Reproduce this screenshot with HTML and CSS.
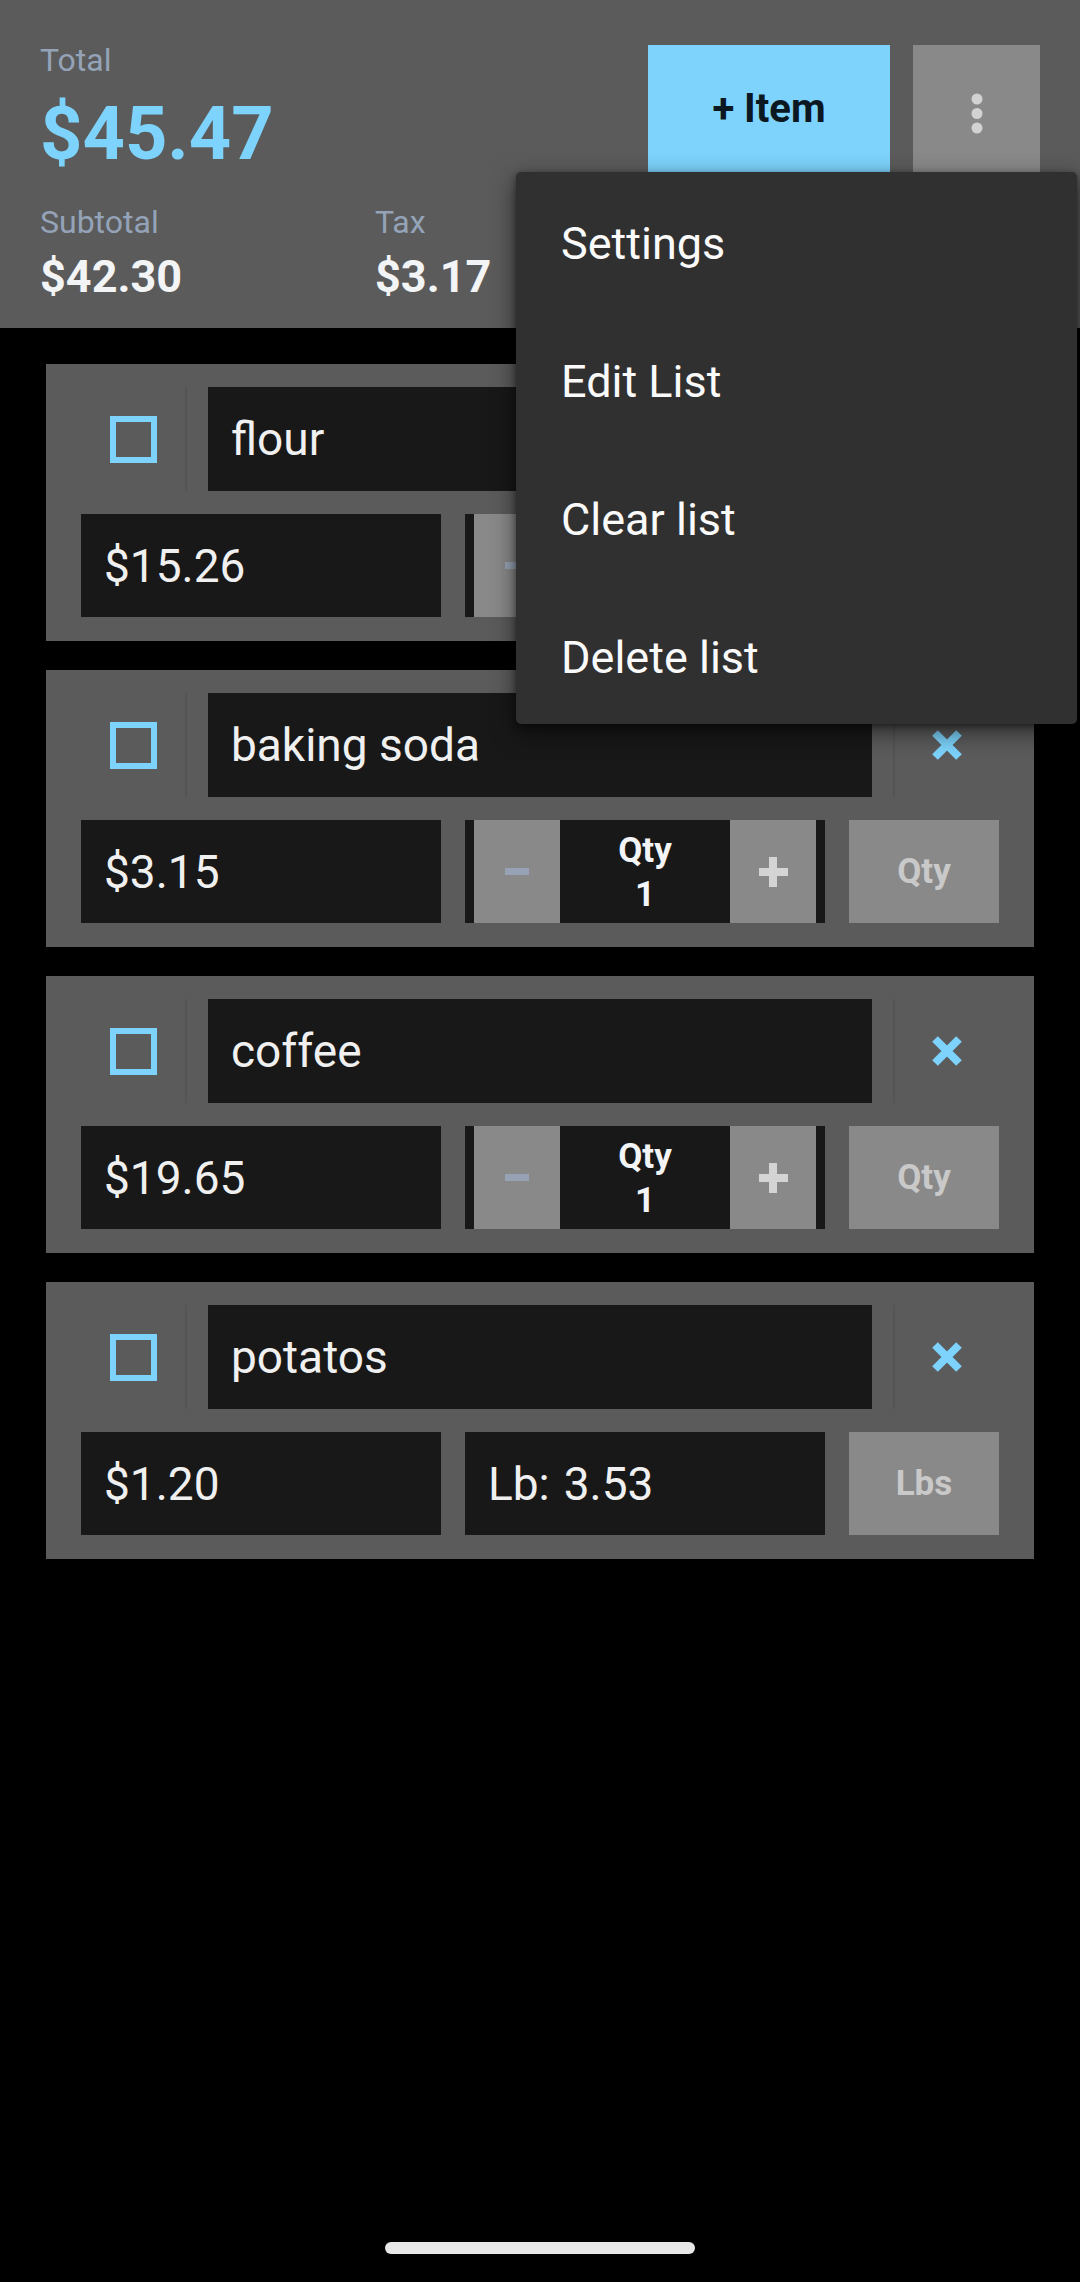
FILE: index.html
```html
<!DOCTYPE html>
<html lang="en">
<head>
    <meta charset="UTF-8">
    <meta name="viewport" content="width=device-width, initial-scale=1.0">
    <title>Shopping List</title>
    <link rel="stylesheet" href="styles.css">
</head>
<body>
<div class="app">
    <!-- Totals header -->
    <div class="summary">
        <div class="totals">
            <div class="label">Total</div>
            <div class="total-value">$45.47</div>
            <div class="breakdown">
                <div class="col col-sub">
                    <div class="label">Subtotal</div>
                    <div class="value">$42.30</div>
                </div>
                <div class="col">
                    <div class="label">Tax</div>
                    <div class="value">$3.17</div>
                </div>
            </div>
        </div>
        <div class="actions">
            <button class="add-btn">+ Item</button>
            <button class="more-btn">
                <svg width="12" height="42" viewBox="0 0 12 42">
                    <circle cx="6" cy="6" r="5.5" fill="#d2d2d2"/>
                    <circle cx="6" cy="20.5" r="5.5" fill="#d2d2d2"/>
                    <circle cx="6" cy="35" r="5.5" fill="#d2d2d2"/>
                </svg>
            </button>
        </div>
    </div>

    <!-- Items -->
    <div class="items">
        <div class="card">
            <div class="row-top">
                <div class="check-cell"><span class="checkbox"></span></div>
                <div class="field name">flour</div>
                <div class="remove-cell">
                    <svg width="30" height="30" viewBox="0 0 30 30"><path d="M3 3L27 27M27 3L3 27" stroke="#7dd3fc" stroke-width="8"/></svg>
                </div>
            </div>
            <div class="row-bottom">
                <div class="field price">$15.26</div>
                <div class="qty">
                    <div class="step"><span class="minus"></span></div>
                    <div class="qty-value">Qty<br>1</div>
                    <div class="step"><span class="plus"></span></div>
                </div>
                <div class="unit-btn">Qty</div>
            </div>
        </div>

        <div class="card">
            <div class="row-top">
                <div class="check-cell"><span class="checkbox"></span></div>
                <div class="field name">baking soda</div>
                <div class="remove-cell">
                    <svg width="30" height="30" viewBox="0 0 30 30"><path d="M3 3L27 27M27 3L3 27" stroke="#7dd3fc" stroke-width="8"/></svg>
                </div>
            </div>
            <div class="row-bottom">
                <div class="field price">$3.15</div>
                <div class="qty">
                    <div class="step"><span class="minus"></span></div>
                    <div class="qty-value">Qty<br>1</div>
                    <div class="step"><span class="plus"></span></div>
                </div>
                <div class="unit-btn">Qty</div>
            </div>
        </div>

        <div class="card">
            <div class="row-top">
                <div class="check-cell"><span class="checkbox"></span></div>
                <div class="field name">coffee</div>
                <div class="remove-cell">
                    <svg width="30" height="30" viewBox="0 0 30 30"><path d="M3 3L27 27M27 3L3 27" stroke="#7dd3fc" stroke-width="8"/></svg>
                </div>
            </div>
            <div class="row-bottom">
                <div class="field price">$19.65</div>
                <div class="qty">
                    <div class="step"><span class="minus"></span></div>
                    <div class="qty-value">Qty<br>1</div>
                    <div class="step"><span class="plus"></span></div>
                </div>
                <div class="unit-btn">Qty</div>
            </div>
        </div>

        <div class="card">
            <div class="row-top">
                <div class="check-cell"><span class="checkbox"></span></div>
                <div class="field name">potatos</div>
                <div class="remove-cell">
                    <svg width="30" height="30" viewBox="0 0 30 30"><path d="M3 3L27 27M27 3L3 27" stroke="#7dd3fc" stroke-width="8"/></svg>
                </div>
            </div>
            <div class="row-bottom">
                <div class="field price">$1.20</div>
                <div class="field weight"><span class="unit">Lb:</span>3.53</div>
                <div class="unit-btn">Lbs</div>
            </div>
        </div>
    </div>

    <!-- Overflow menu (open) -->
    <div class="menu">
        <div class="menu-item">Settings</div>
        <div class="menu-item">Edit List</div>
        <div class="menu-item">Clear list</div>
        <div class="menu-item">Delete list</div>
    </div>

    <div class="home-bar"></div>
</div>
</body>
</html>
```

FILE: styles.css
```css
body {
    margin: 0;
    background-color: #000;
    font-family: Roboto, "Noto Sans", sans-serif;
    color: #f3f4f6;
}

.app {
    position: relative;
    width: 1080px;
    height: 2282px;
    overflow: hidden;
}

/* header */
.summary {
    box-sizing: border-box;
    height: 328px;
    background-color: #5b5b5b;
    padding: 41px 40px 28px 40px;
    display: flex;
    justify-content: space-between;
    align-items: flex-start;
}

.label {
    font-size: 32px;
    line-height: 38px;
    color: #94a3b8;
}

.total-value {
    margin-top: 17px;
    font-size: 74px;
    line-height: 75px;
    font-weight: bold;
    color: #7dd3fc;
}

.breakdown {
    display: flex;
    margin-top: 32px;
}

.col-sub {
    width: 335px;
}

.col .value {
    margin-top: 13px;
    font-size: 45px;
    line-height: 46px;
    font-weight: bold;
    color: #f3f4f6;
}

.actions {
    display: flex;
    gap: 23px;
    margin-top: 4px;
}

.add-btn, .more-btn {
    border: none;
    height: 127px;
    padding: 0;
    display: flex;
    align-items: center;
    justify-content: center;
    font-family: inherit;
}

.add-btn {
    width: 242px;
    background-color: #7dd3fc;
    color: #0b1721;
    font-size: 40px;
    font-weight: bold;
}

.more-btn {
    width: 127px;
    background-color: #898989;
    padding-top: 10px;
}

/* list */
.items {
    padding: 36px 46px 0 46px;
    display: flex;
    flex-direction: column;
    gap: 29px;
}

.card {
    background-color: #5b5b5b;
    padding: 23px 35px 24px 35px;
    display: flex;
    flex-direction: column;
    gap: 23px;
}

.row-top {
    display: flex;
    gap: 23px;
    height: 104px;
}

.row-bottom {
    display: flex;
    gap: 24px;
    height: 103px;
}

.check-cell, .remove-cell {
    width: 104px;
    flex-shrink: 0;
    display: flex;
    align-items: center;
    justify-content: center;
}

.check-cell {
    box-shadow: 2px 0 0 rgba(0, 0, 0, 0.07);
}

.remove-cell {
    box-shadow: -2px 0 0 rgba(0, 0, 0, 0.07);
}

.checkbox {
    box-sizing: border-box;
    width: 47px;
    height: 47px;
    border: 6px solid #7dd3fc;
}

.field {
    background-color: #181818;
    font-size: 46px;
    color: #f0f0f0;
    display: flex;
    align-items: center;
    padding-left: 23px;
    box-sizing: border-box;
}

.name {
    flex: 1;
}

.price, .weight {
    width: 360px;
}

.weight .unit {
    margin-right: 14px;
}

.qty {
    width: 360px;
    box-sizing: border-box;
    background-color: #181818;
    padding: 0 9px;
    display: flex;
}

.step {
    width: 86px;
    background-color: #898989;
    display: flex;
    align-items: center;
    justify-content: center;
}

.minus {
    width: 24px;
    height: 7px;
    background-color: #97a3b4;
}

.plus {
    position: relative;
    width: 29px;
    height: 30px;
}

.plus::before, .plus::after {
    content: "";
    position: absolute;
    background-color: #d4d4d4;
}

.plus::before {
    left: 0;
    right: 0;
    top: 11px;
    height: 8px;
}

.plus::after {
    top: 0;
    bottom: 0;
    left: 10.5px;
    width: 8px;
}

.qty-value {
    flex: 1;
    display: flex;
    flex-direction: column;
    align-items: center;
    justify-content: center;
    text-align: center;
    padding-top: 3px;
    font-size: 35px;
    line-height: 44px;
    font-weight: bold;
    color: #f3f4f6;
}

.unit-btn {
    width: 150px;
    background-color: #898989;
    color: #c9c9c9;
    font-size: 35px;
    font-weight: bold;
    display: flex;
    align-items: center;
    justify-content: center;
}

/* popup menu */
.menu {
    position: absolute;
    left: 516px;
    top: 172px;
    width: 561px;
    background-color: #303030;
    border-radius: 5px;
    box-shadow: 0 8px 24px rgba(0, 0, 0, 0.55), 0 2px 6px rgba(0, 0, 0, 0.4);
}

.menu-item {
    height: 138px;
    padding-left: 45px;
    padding-top: 4px;
    box-sizing: border-box;
    display: flex;
    align-items: center;
    font-size: 45px;
    color: #fafafa;
}

.home-bar {
    position: absolute;
    left: 385px;
    bottom: 28px;
    width: 310px;
    height: 12px;
    border-radius: 6px;
    background-color: #e8e8e8;
}
```
